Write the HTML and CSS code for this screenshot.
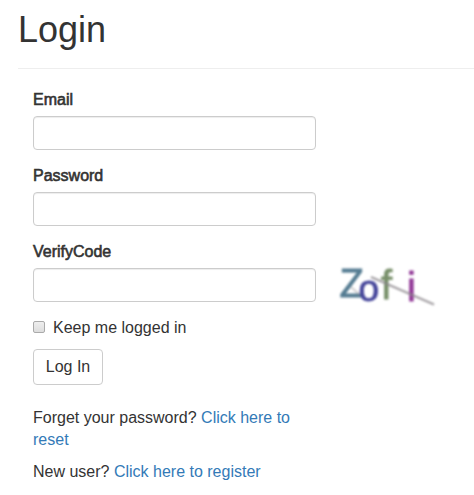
FILE: index.html
```html
<!DOCTYPE html>
<html lang="en">
<head>
<meta charset="utf-8">
<title>Login</title>
<link rel="stylesheet" href="styles.css">
</head>
<body>
<main class="page">
  <header class="page-header"><h1>Login</h1></header>
  <form class="login">
    <div class="field">
      <label for="email">Email</label>
      <input class="control" id="email" type="text">
    </div>
    <div class="field">
      <label for="password">Password</label>
      <input class="control" id="password" type="password">
    </div>
    <div class="verify">
      <div class="field">
        <label for="code">VerifyCode</label>
        <input class="control" id="code" type="text">
      </div>
      <svg class="captcha" width="110" height="50" viewBox="0 0 110 50">
        <g class="captcha-ink">
          <text class="glyph z" x="4.5" y="38">Z</text>
          <text class="glyph o" x="23.5" y="41.5">o</text>
          <text class="glyph f" x="46" y="39.5">f</text>
          <text class="glyph i" x="72" y="41.5">i</text>
          <path class="scratch" d="M36 18 L99 45.5"/>
          <path class="scratch faint" d="M16 28 L25 36"/>
        </g>
      </svg>
    </div>
    <label class="remember"><input class="box" type="checkbox">Keep me logged in</label>
    <button class="submit" type="button">Log In</button>
    <p class="hint">Forget your password? <a href="#">Click here to reset</a></p>
    <p class="hint">New user? <a href="#">Click here to register</a></p>
  </form>
</main>
</body>
</html>
```
FILE: styles.css
```css
* { box-sizing: border-box; }
body {
  margin: 0;
  background: #fff;
  color: #333;
  font: 16px/22px "Liberation Sans", Arial, sans-serif;
  overflow: hidden;
}
.page { padding: 10px 0 0 18px; }
.page-header { height: 59px; border-bottom: 1px solid #eee; }
h1 { margin: 0; font-size: 36px; font-weight: 400; line-height: 40px; }
.login { width: 298px; padding: 20px 0 0 15px; }
.field { width: 283px; margin-bottom: 15px; }
.field label {
  display: block;
  height: 22px;
  margin-bottom: 5px;
  -webkit-text-stroke: 0.6px #333;
}
.control {
  display: block;
  width: 283px;
  height: 34px;
  border: 1px solid #ccc;
  border-radius: 4px;
  padding: 6px 12px;
  box-shadow: inset 0 1px 1px rgba(0, 0, 0, .075);
  outline: 0;
}
.verify { display: flex; width: 420px; align-items: flex-start; }
.captcha { flex: none; margin: 18px 0 0 19px; }
.captcha-ink { filter: blur(.9px); }
.glyph { font-family: "Liberation Sans", Arial, sans-serif; stroke-width: .8px; }
.z { font-size: 40px; fill: #557c92; stroke: #557c92; }
.o { font-size: 37px; fill: #45459a; stroke: #45459a; }
.f { font-size: 40px; fill: #78906a; stroke: #78906a; }
.i { font-size: 40px; fill: #923a98; stroke: #923a98; }
.scratch { fill: none; stroke: #8b868b; stroke-opacity: .8; stroke-width: 2; }
.faint { stroke-opacity: .4; }
.remember { display: flex; align-items: center; height: 22px; }
.box {
  appearance: none;
  width: 12px;
  height: 12px;
  margin: 0 8px 2px 0;
  border: 1px solid #aaa;
  border-radius: 2px;
  background: linear-gradient(#eee, #ddd);
}
.submit {
  display: block;
  width: 70px;
  height: 36px;
  margin: 10px 0 22px;
  padding: 0;
  border: 1px solid #ccc;
  border-radius: 4px;
  background: #fff;
  color: #333;
  font: inherit;
}
.hint { margin: 0 0 10px; }
a { color: #337ab7; text-decoration: none; }
```
